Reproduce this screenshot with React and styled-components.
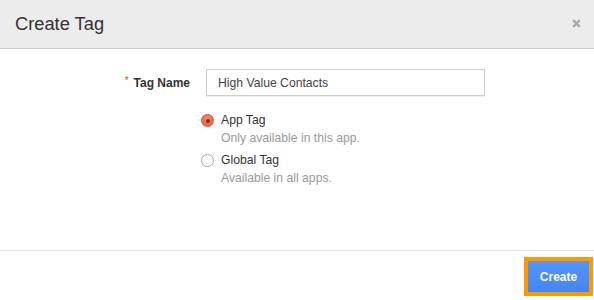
import React from "react";
import styled, { createGlobalStyle } from "styled-components";

const Global = createGlobalStyle`
  html, body { margin: 0; padding: 0; background: #fff; }
  body { font-family: "Liberation Sans", Arial, sans-serif; color: #333; }
`;

const Dialog = styled.div`
  width: 594px;
  height: 300px;
  display: flex;
  flex-direction: column;
  background: #fff;
`;

const Header = styled.div`
  height: 49px;
  box-sizing: border-box;
  background: #ececec;
  border-bottom: 1px solid #c9c9c9;
  display: flex;
  align-items: center;
  justify-content: space-between;
  padding: 0 13px 1px 15px;
`;

const Title = styled.h1`
  margin: 0;
  font-size: 18.3px;
  font-weight: normal;
  color: #333;
`;

const Close = styled.button`
  border: 0;
  background: none;
  padding: 0;
  width: 10px;
  height: 10px;
  display: flex;
  align-items: center;
  justify-content: center;
  cursor: pointer;
`;

const Body = styled.div`
  flex: 1;
  padding-top: 20px;
  display: grid;
  grid-template-columns: 190px 1fr;
  column-gap: 12px;
  row-gap: 15px;
  align-content: start;
  border-bottom: 1px solid #e5e5e5;
`;

const Label = styled.label`
  justify-self: end;
  align-self: center;
  font-size: 12px;
  font-weight: bold;
  color: #333;
  display: flex;
  align-items: center;
  gap: 5px;
`;

const Star = styled.span`
  color: #e0412f;
  font-size: 10px;
  font-weight: normal;
  position: relative;
  top: -2px;
`;

const Input = styled.input`
  margin-left: 4px;
  width: 279px;
  height: 27px;
  box-sizing: border-box;
  border: 1px solid #cfcfcf;
  box-shadow: 0 1px 1px rgba(0, 0, 0, 0.06);
  padding: 0 11px;
  font-family: "Liberation Sans", Arial, sans-serif;
  font-size: 12.2px;
  color: #444;
  outline: none;
`;

const Options = styled.div`
  grid-column: 2;
  display: flex;
  flex-direction: column;
  gap: 4px;
`;

const Option = styled.label`
  display: flex;
  align-items: flex-start;
  gap: 7px;
  cursor: pointer;
`;

const Radio = styled.span`
  margin: 3px 0 0 -1px;
  width: 13px;
  height: 13px;
  box-sizing: border-box;
  border-radius: 50%;
  flex: none;
  display: flex;
  align-items: center;
  justify-content: center;
  border: 1px solid ${(p) => (p.$checked ? "#d4552c" : "#a9a9a9")};
  background: ${(p) =>
    p.$checked ? "radial-gradient(circle at 50% 35%, #f58a62, #e4603a)" : "#fff"};
  &::after {
    content: "";
    width: 4px;
    height: 4px;
    border-radius: 50%;
    background: ${(p) => (p.$checked ? "#8a2a10" : "transparent")};
  }
`;

const OptionText = styled.div`
  display: flex;
  flex-direction: column;
`;

const OptionTitle = styled.span`
  font-size: 12.2px;
  line-height: 18px;
  color: #333;
`;

const OptionDesc = styled.span`
  font-size: 12.2px;
  line-height: 18px;
  color: #9a9a9a;
`;

const Footer = styled.div`
  height: 49px;
  display: flex;
  align-items: center;
  justify-content: flex-end;
  padding: 2px 5px 0 0;
  box-sizing: border-box;
`;

const Button = styled.button`
  width: 61px;
  height: 31px;
  border: 0;
  background: linear-gradient(#5294fa, #4485f0);
  color: #fff;
  font-family: "Liberation Sans", Arial, sans-serif;
  font-size: 12px;
  font-weight: bold;
  outline: 4px solid #ff9900;
  box-shadow: -5px 0 0 -4px #2c5ca8;
  cursor: pointer;
`;

export default function App() {
  return (
    <>
      <Global />
      <Dialog>
        <Header>
          <Title>Create Tag</Title>
          <Close aria-label="Close">
            <svg width="9" height="9" viewBox="0 0 9 9">
              <path d="M1.2 1.2 L7.8 7.8 M7.8 1.2 L1.2 7.8" stroke="#aaa" strokeWidth="2.4" strokeLinecap="butt" />
            </svg>
          </Close>
        </Header>
        <Body>
          <Label>
            <Star>*</Star>Tag Name
          </Label>
          <Input defaultValue="High Value Contacts" />
          <Options>
            <Option>
              <Radio $checked />
              <OptionText>
                <OptionTitle>App Tag</OptionTitle>
                <OptionDesc>Only available in this app.</OptionDesc>
              </OptionText>
            </Option>
            <Option>
              <Radio />
              <OptionText>
                <OptionTitle>Global Tag</OptionTitle>
                <OptionDesc>Available in all apps.</OptionDesc>
              </OptionText>
            </Option>
          </Options>
        </Body>
        <Footer>
          <Button>Create</Button>
        </Footer>
      </Dialog>
    </>
  );
}
